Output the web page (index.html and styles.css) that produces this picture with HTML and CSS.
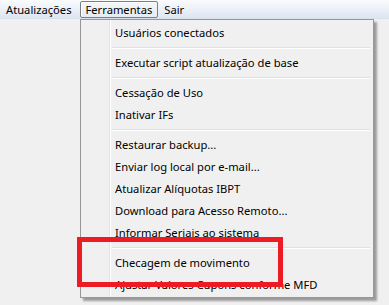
FILE: index.html
```html
<!DOCTYPE html>
<html lang="pt-BR">
<head>
    <meta charset="UTF-8">
    <title>Ferramentas</title>
    <link rel="stylesheet" href="styles.css">
</head>
<body>
    <div class="menubar">
        <span class="menubar-item">Atualizações</span>
        <span class="menubar-item open">Ferramentas</span>
        <span class="menubar-item">Sair</span>
    </div>

    <!-- Dropdown of "Ferramentas" -->
    <div class="dropdown">
        <div class="item">Usuários conectados</div>
        <div class="sep"></div>
        <div class="item">Executar script atualização de base</div>
        <div class="sep"></div>
        <div class="item">Cessação de Uso</div>
        <div class="item">Inativar IFs</div>
        <div class="sep"></div>
        <div class="item">Restaurar backup...</div>
        <div class="item">Enviar log local por e-mail...</div>
        <div class="item">Atualizar Alíquotas IBPT</div>
        <div class="item">Download para Acesso Remoto...</div>
        <div class="item">Informar Seriais ao sistema</div>
        <div class="sep"></div>
        <div class="item">Checagem de movimento</div>
        <div class="item">Ajustar Valores Cupons conforme MFD</div>
    </div>

    <!-- highlight drawn on top of the screenshot -->
    <div class="highlight"></div>
</body>
</html>
```

FILE: styles.css
```css
body {
    margin: 0;
    background-color: #f0f0f0;
    font-family: "Noto Sans", "Open Sans", sans-serif;
    font-size: 11.2px;
    color: #000;
    width: 389px;
    height: 305px;
    overflow: hidden;
}

.menubar {
    display: flex;
    height: 19px;
    padding-left: 0;
    background: linear-gradient(to bottom, #fafbfd 0%, #eef2f8 45%, #dde5f2 100%);
    border-bottom: 1px solid #d8e0ec;
    box-sizing: border-box;
}

.menubar-item {
    display: flex;
    align-items: center;
    height: 17px;
    margin-top: 1px;
    padding: 0 5px;
    border: 1px solid transparent;
    box-sizing: border-box;
}

.menubar-item.open {
    margin-left: 2px;
    border-color: #7a7f86;
    border-radius: 2px;
    background: linear-gradient(to bottom, #f4f6f9, #e6ebf2);
    box-shadow: inset 1px 1px 0 #ffffff;
}

.dropdown {
    position: absolute;
    left: 80px;
    top: 19px;
    width: 294px;
    padding: 2px 2px 1px 2px;
    box-sizing: border-box;
    background-color: #f0f0f0;
    border: 1px solid #979797;
    box-shadow: 3px 3px 2px rgba(0, 0, 0, 0.35);
    background-image: linear-gradient(to right, transparent 28px, #e2e3e3 28px, #e2e3e3 29px, #ffffff 29px, #ffffff 30px, transparent 30px);
}

.item {
    height: 22px;
    line-height: 22px;
    padding-left: 32px;
    white-space: nowrap;
}

.sep {
    height: 8px;
    margin-left: 29px;
    margin-right: 1px;
    background: linear-gradient(to bottom, transparent 3px, #e0e0e0 3px, #e0e0e0 4px, #ffffff 4px, #ffffff 5px, transparent 5px);
}

.highlight {
    position: absolute;
    left: 77px;
    top: 237px;
    width: 206px;
    height: 50px;
    border: 5px solid #ed1c24;
    box-sizing: border-box;
}
```
